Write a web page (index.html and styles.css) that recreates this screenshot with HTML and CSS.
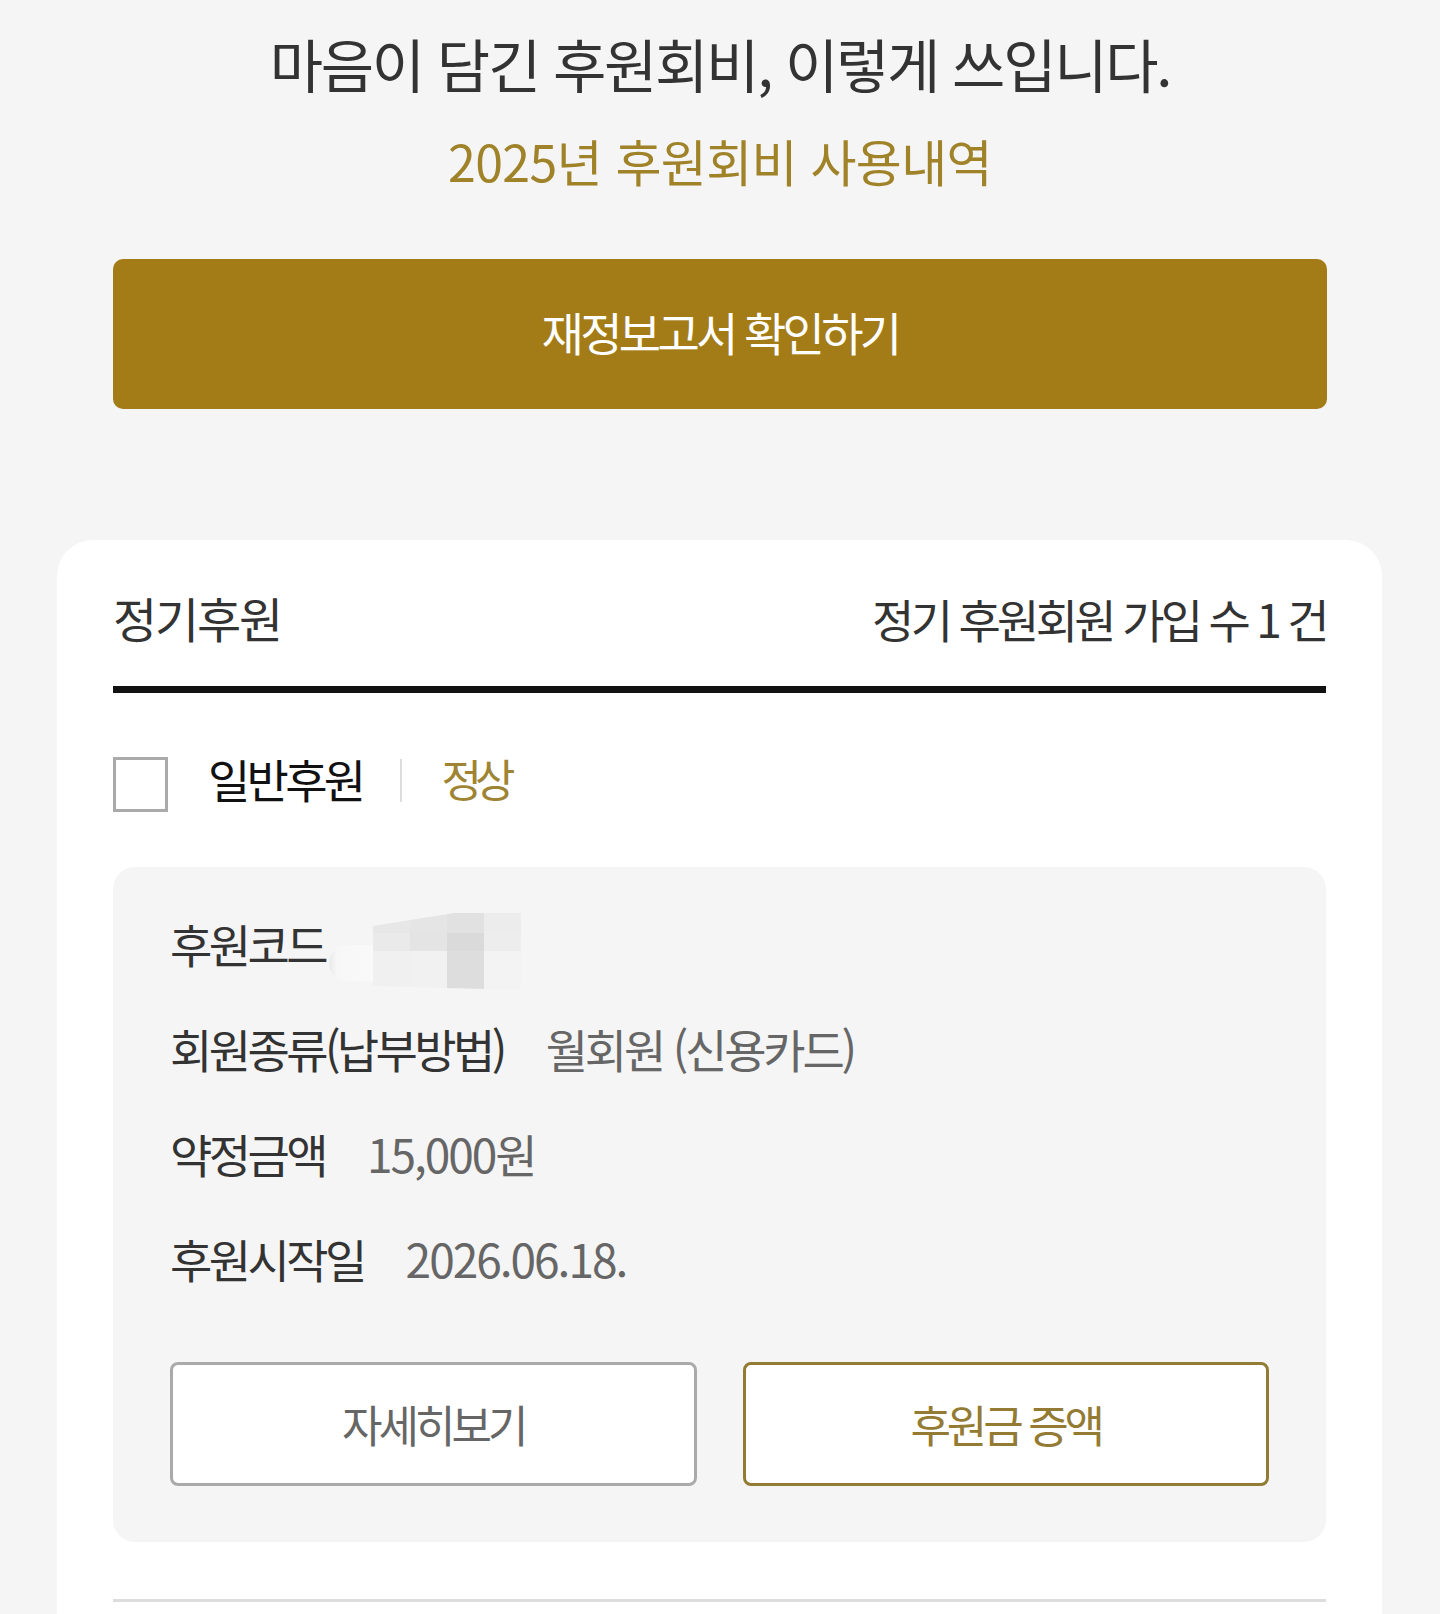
FILE: index.html
```html
<!DOCTYPE html>
<html lang="ko">
<head>
    <meta charset="UTF-8">
    <meta name="viewport" content="width=device-width, initial-scale=1.0">
    <title>정기후원</title>
    <link rel="stylesheet" href="styles.css">
</head>
<body>
    <section class="intro">
        <h1 class="intro-title">마음이 담긴 후원회비, 이렇게 쓰입니다.</h1>
        <p class="intro-sub">2025년 후원회비 사용내역</p>
        <a class="report-btn" href="#">재정보고서 확인하기</a>
    </section>

    <section class="card">
        <div class="card-head">
            <h2>정기후원</h2>
            <span class="card-count">정기 후원회원 가입 수 1 건</span>
        </div>

        <div class="item">
            <div class="item-top">
                <span class="check"></span>
                <span class="item-name">일반후원</span>
                <span class="sep"></span>
                <span class="item-state">정상</span>
            </div>

            <div class="info">
                <dl class="info-list">
                    <div class="row">
                        <dt>후원코드</dt>
                        <dd class="masked">
                            <span class="mask-lead"></span>
                            <span class="mask-grid">
                                <i class="c1"></i><i class="c2"></i><i class="c3"></i><i class="c4"></i>
                                <i class="c5"></i><i class="c6"></i><i class="c7"></i><i class="c8"></i>
                                <i class="c9"></i><i class="c10"></i><i class="c11"></i><i class="c12"></i>
                            </span>
                        </dd>
                    </div>
                    <div class="row">
                        <dt>회원종류(납부방법)</dt>
                        <dd>월회원 (신용카드)</dd>
                    </div>
                    <div class="row">
                        <dt>약정금액</dt>
                        <dd class="num">15,000원</dd>
                    </div>
                    <div class="row">
                        <dt>후원시작일</dt>
                        <dd class="num">2026.06.18.</dd>
                    </div>
                </dl>

                <div class="actions">
                    <a class="btn" href="#">자세히보기</a>
                    <a class="btn btn-gold" href="#">후원금 증액</a>
                </div>
            </div>
        </div>

        <div class="card-divider"></div>
    </section>
</body>
</html>
```

FILE: styles.css
```css
body {
    margin: 0;
    padding: 0;
    background-color: #f5f5f5;
    font-family: "Noto Sans CJK KR", "Noto Sans", sans-serif;
    color: #333;
}

a {
    text-decoration: none;
}

.intro {
    padding: 28px 113px 0;
    text-align: center;
}

.intro-title {
    margin: 0;
    font-size: 58px;
    line-height: 70px;
    font-weight: 400;
    letter-spacing: -2.3px;
    color: #333;
}

.intro-sub {
    margin: 32px 0 0;
    font-size: 50px;
    line-height: 60px;
    letter-spacing: -0.6px;
    color: #a08228;
}

.report-btn {
    display: flex;
    justify-content: center;
    align-items: center;
    box-sizing: border-box;
    height: 150px;
    margin-top: 69px;
    padding-bottom: 6px;
    background-color: #a37c17;
    border-radius: 10px;
    color: #fff;
    font-size: 46px;
    letter-spacing: -3.7px;
}

.card {
    margin: 131px 58px 0 57px;
    padding: 49px 56px 80px;
    background: #fff;
    border-radius: 36px 36px 0 0;
}

.card-head {
    display: flex;
    justify-content: space-between;
    align-items: baseline;
    padding-bottom: 40px;
    border-bottom: 7px solid #111;
}

.card-head h2 {
    margin: 0;
    font-size: 48px;
    line-height: 56px;
    font-weight: 400;
    letter-spacing: -2.2px;
    color: #333;
}

.card-count {
    font-size: 46px;
    line-height: 56px;
    letter-spacing: -3.7px;
    color: #333;
}

.item-top {
    display: flex;
    align-items: center;
    margin-top: 58px;
}

.check {
    width: 49px;
    height: 49px;
    border: 3px solid #aaa;
    background: #fff;
}

.item-name {
    margin-left: 40px;
    padding-bottom: 12px;
    font-size: 46px;
    line-height: 54px;
    letter-spacing: -3.7px;
    color: #111;
}

.sep {
    width: 2px;
    height: 43px;
    margin: 0 39px 8px 38px;
    background: #ddd;
}

.item-state {
    padding-bottom: 12px;
    font-size: 44px;
    line-height: 54px;
    letter-spacing: -7px;
    color: #9e8433;
}

.info {
    margin-top: 50px;
    padding: 49px 57px 56px;
    background: #f5f5f5;
    border-radius: 22px;
}

.info-list {
    display: flex;
    flex-direction: column;
    gap: 51px;
    margin: 0;
}

.row {
    display: flex;
    align-items: center;
    height: 54px;
}

.row dt,
.row dd {
    margin: 0;
    font-size: 46px;
    line-height: 54px;
}

.row dt {
    color: #333;
    letter-spacing: -3.6px;
}

.row dd {
    margin-left: 42px;
    color: #666;
    letter-spacing: -3.2px;
}

.row dd.num {
    letter-spacing: -2px;
}

.row .masked {
    display: flex;
    align-items: center;
    margin-left: 4px;
    padding-top: 16px;
}

.mask-lead {
    width: 44px;
    height: 36px;
    margin-top: 24px;
    border-radius: 18px 0 0 18px;
    background: linear-gradient(90deg, #e9e9e9 0, #f7f7f7 8px, #f9f9f9 100%);
}

.mask-grid {
    display: grid;
    grid-template-columns: repeat(4, 37px);
    grid-template-rows: 20px 18px 38px;
    width: 148px;
    height: 76px;
    clip-path: polygon(0 17%, 55% 0, 100% 0, 100% 100%, 75% 100%, 0 96%);
}

.mask-grid i {
    display: block;
}

.c1 { background: #e7e7e7; }
.c2 { background: #e5e5e5; }
.c3 { background: #e1e1e1; }
.c4 { background: #ececec; }
.c5 { background: #eaeaea; }
.c6 { background: #e4e4e4; }
.c7 { background: #dadada; }
.c8 { background: #ededed; }
.c9 { background: #f0f0f0; }
.c10 { background: #f1f1f1; }
.c11 { background: #dddddd; }
.c12 { background: #f3f3f3; }

.actions {
    display: grid;
    grid-template-columns: 1fr 1fr;
    gap: 46px;
    margin-top: 77px;
}

.btn {
    display: flex;
    justify-content: center;
    align-items: center;
    height: 118px;
    background: #fff;
    border: 3px solid #aaa;
    border-radius: 8px;
    color: #666;
    font-size: 44px;
    letter-spacing: -4px;
}

.btn-gold {
    border-color: #937b33;
    color: #937b33;
}

.card-divider {
    height: 3px;
    margin-top: 57px;
    background: #ddd;
}
```
